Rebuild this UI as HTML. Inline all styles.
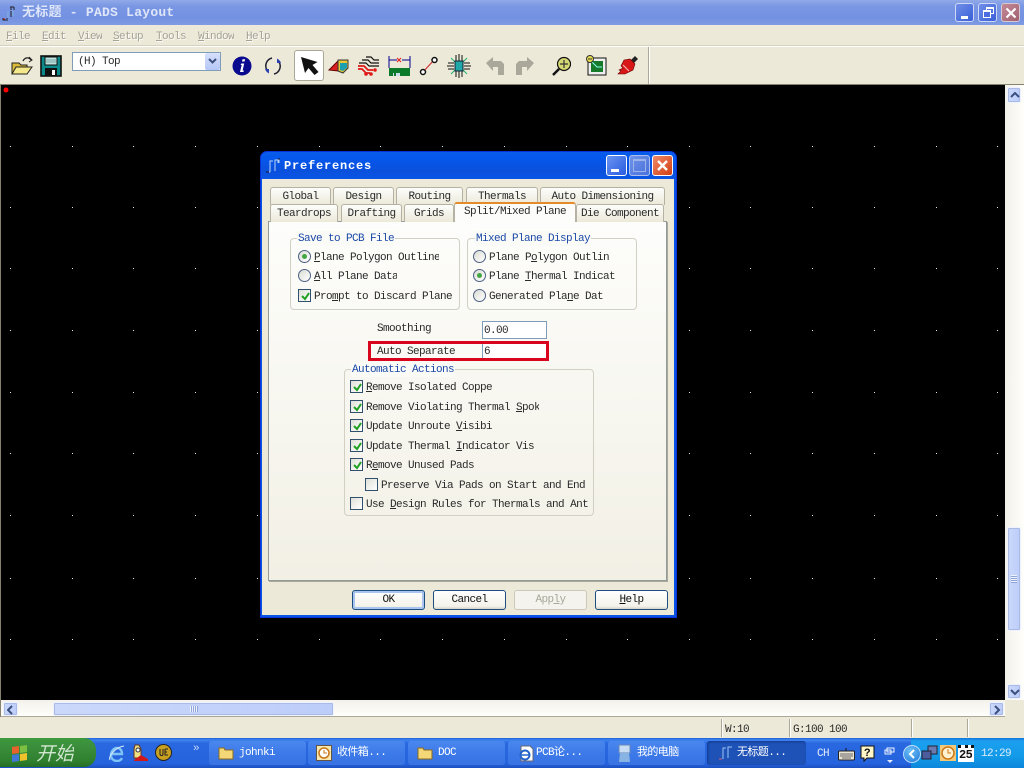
<!DOCTYPE html>
<html><head><meta charset="utf-8"><title>PADS Layout</title>
<style>
html,body{margin:0;padding:0;width:1024px;height:768px;overflow:hidden;background:#ece9d8}
div,span,svg{position:absolute;box-sizing:border-box}
u{text-decoration:underline}
.t{font:11px/14px "Liberation Mono","Noto Sans CJK SC",monospace;letter-spacing:-.6px;white-space:pre;color:#2a2a2a;overflow:hidden;padding-top:1px}
.m{color:#a5a396;text-shadow:1px 1px 0 #fbfaf5;font-size:11px;top:29px}
.tab{background:linear-gradient(#fdfdfb,#ece9d8);border:1px solid #b5b2a4;border-bottom:none;border-radius:3px 3px 0 0;text-align:center;font:11px/18px "Liberation Mono",monospace;letter-spacing:-.6px;color:#2a2a2a}
.grp{border:1px solid #d2d0c3;border-radius:4px}
.lbl{color:#1c4aa8;background:#fafaf6;padding:1px 1px 0}
.r{width:13px;height:13px;border:1px solid #4d6185;border-radius:50%;background:linear-gradient(135deg,#dcdcd5,#fff)}
.r.on:after{content:"";position:absolute;left:3px;top:3px;width:5px;height:5px;border-radius:50%;background:#43a644}
.c{width:13px;height:13px;border:1px solid #31506e;background:linear-gradient(135deg,#e0e0d9,#fff)}
.c svg{left:1px;top:1px}
.btn{top:590px;width:73px;height:20px;border:1px solid #1c4f80;border-radius:3px;background:linear-gradient(#fff,#f3f2ea 85%,#d6d0c5);text-align:center;font:11px/18px "Liberation Mono",monospace;letter-spacing:-.6px;color:#111}
.sb{background:linear-gradient(90deg,#cbd8fb,#bccdf9);border:1px solid #eef2fe;border-radius:2px;box-shadow:0 0 0 1px #a9bbe5 inset}
.tb{top:741px;height:24px;width:97px;background:linear-gradient(#4a87ee,#3b78e8 60%,#3a73e2);border-radius:3px;color:#fff;font:11px/23px "Liberation Mono","Noto Sans CJK SC",monospace;letter-spacing:-.6px;white-space:pre}
.tb span{left:30px;top:1px}
.sep{top:719px;height:18px;width:2px;border-left:1px solid #aca899;border-right:1px solid #fff}
</style></head><body>

<!-- title bar -->
<div style="left:0;top:0;width:1024px;height:25px;background:linear-gradient(#90a9e8,#7a97e4 25%,#7391e2 70%,#7e9be2)"></div>
<svg style="left:2px;top:5px" width="16" height="16" viewBox="0 0 16 16"><path d="M8 2h4M9 2v3M12 2v3M1 13v2h3M5 13v3M9 6v6" stroke="#222" fill="none"/><path d="M6 6v7M11 6v5" stroke="#7fb0e0" fill="none"/><path d="M1 14h2" stroke="#b22" fill="none"/></svg>
<div class="t" style="left:22px;top:4px;font-size:13px;line-height:16px;letter-spacing:.25px;color:#dfe6f8;font-weight:bold">无标题 - PADS Layout</div>
<div style="left:955px;top:3px;width:19px;height:19px;background:linear-gradient(135deg,#6f8fe8,#3a5fd8);border:1px solid #cfd8f5;border-radius:3px"><div style="left:5px;top:12px;width:7px;height:3px;background:#fff"></div></div>
<div style="left:978px;top:3px;width:19px;height:19px;background:linear-gradient(135deg,#6f8fe8,#3a5fd8);border:1px solid #cfd8f5;border-radius:3px"><div style="left:7px;top:3px;width:8px;height:7px;border:1px solid #fff;border-top-width:2px"></div><div style="left:4px;top:6px;width:8px;height:8px;border:1px solid #fff;border-top-width:2px;background:#4a6de0"></div></div>
<div style="left:1001px;top:3px;width:19px;height:19px;background:linear-gradient(135deg,#c48a98,#a06070);border:1px solid #d8c8d0;border-radius:3px"><svg style="left:3px;top:3px" width="12" height="12"><path d="M1.5 1.5l9 9M10.5 1.5l-9 9" stroke="#fff" stroke-width="2.2"/></svg></div>

<!-- menu -->
<div style="left:0;top:25px;width:1024px;height:21px;background:#ece9d8"></div>
<div style="left:0;top:46px;width:1024px;height:1px;background:#fff"></div>
<div style="left:0;top:45px;width:1024px;height:1px;background:#d5d2c2"></div>
<div class="t m" style="left:6px"><u>F</u>ile</div>
<div class="t m" style="left:42px"><u>E</u>dit</div>
<div class="t m" style="left:78px"><u>V</u>iew</div>
<div class="t m" style="left:113px"><u>S</u>etup</div>
<div class="t m" style="left:156px"><u>T</u>ools</div>
<div class="t m" style="left:198px"><u>W</u>indow</div>
<div class="t m" style="left:246px"><u>H</u>elp</div>

<!-- toolbar -->
<svg style="left:10px;top:55px" width="24" height="22" viewBox="0 0 24 22"><path d="M2 8h7l2 2h6v9H2z" fill="#d8b93a" stroke="#222"/><path d="M2 19l4-7h16l-5 7z" fill="#f5e88a" stroke="#222"/><path d="M13 6c2-4 6-4 8-1" stroke="#222" fill="none" stroke-width="1.3"/><path d="M19 2l3 3-3 2" stroke="#222" fill="none"/></svg>
<svg style="left:40px;top:55px" width="22" height="22" viewBox="0 0 22 22"><rect x="1" y="1" width="20" height="20" fill="#0a8a8a" stroke="#111" stroke-width="1.6"/><rect x="5" y="2" width="12" height="8" fill="#bfe0dc" stroke="#111"/><path d="M6 5h10M6 7h10" stroke="#7aa"/><rect x="5" y="13" width="12" height="8" fill="#111"/><rect x="12" y="15" width="3" height="5" fill="#fff"/></svg>
<div style="left:72px;top:52px;width:149px;height:19px;background:#fff;border:1px solid #7f9db9"></div>
<div class="t" style="left:78px;top:54px">(H) Top</div>
<div style="left:205px;top:53px;width:15px;height:17px;background:linear-gradient(#d6e0fb,#b5c7f7);border-radius:2px"><svg style="left:2px;top:5px" width="11" height="7"><path d="M2 1l3.500 3.500L9 1" stroke="#3a4f7e" stroke-width="2" fill="none"/></svg></div>
<svg style="left:232px;top:56px" width="20" height="20" viewBox="0 0 20 20"><circle cx="10" cy="10" r="9.500" fill="#0a0a8e"/><path d="M10.500 3.200h2.600l-.5 2.300H10zM9.200 7.500h3l-1.600 7h1.300l-.5 1.500H8l1.700-7H8.600z" fill="#fff"/></svg>
<svg style="left:262px;top:55px" width="22" height="22" viewBox="0 0 22 22"><path d="M5 15A8 8 0 0 1 10 3M17 7A8 8 0 0 1 12 19" fill="none" stroke="#223" stroke-width="1.500"/><path d="M15 3.500A8 8 0 0 1 19 8l-4 0zM7 18.500A8 8 0 0 1 3 14l4 0z" fill="#2a3fb0"/></svg>
<div style="left:294px;top:50px;width:30px;height:31px;background:#fff;border:1px solid #a9a797;border-radius:3px"><svg style="left:5px;top:5px" width="20" height="20" viewBox="0 0 20 20"><path d="M1 1l4 16 3.500-5 6 7 4-3-6-7 5-3z" fill="#111"/></svg></div>
<svg style="left:328px;top:56px" width="22" height="20" viewBox="0 0 22 20"><path d="M1 14l9-9v10z" fill="#d82020" stroke="#600"/><path d="M10 4h10v8l-5 5-5-2z" fill="#e6c632" stroke="#333"/><path d="M12 7h7v5l-4 3-3-1z" fill="#1ca0b0"/></svg>
<svg style="left:358px;top:56px" width="22" height="20" viewBox="0 0 22 20"><path d="M1 7h7l3 3h10M4 4h6l3 3h8M8 1h5l3 3h5" stroke="#111" stroke-width="1.200" fill="none"/><path d="M0 10h6l4 4h5M0 13h4l4 4h4" stroke="#e01818" stroke-width="1.800" fill="none"/><circle cx="8" cy="18" r="1.800" fill="#e01818"/><circle cx="13" cy="18" r="1.800" fill="#e01818"/><circle cx="17" cy="14" r="1.800" fill="#e01818"/></svg>
<svg style="left:388px;top:55px" width="23" height="22" viewBox="0 0 23 22"><path d="M1 1v12M22 1v12M1 5h8M14 5h8" stroke="#00008b" fill="none"/><path d="M9 3l4 4M13 3l-4 4" stroke="#e01818"/><rect x="1" y="13" width="21" height="8" fill="#0b7a2a"/><path d="M5 18h1v3H5zM8 18h4v3H8z" fill="#cde"/></svg>
<svg style="left:419px;top:56px" width="20" height="20" viewBox="0 0 20 20"><path d="M4 16L15 4" stroke="#d03030" stroke-width="1.200"/><circle cx="4" cy="16" r="2.500" fill="#fff" stroke="#111" stroke-width="1.500"/><circle cx="15.500" cy="4" r="2.500" fill="#fff" stroke="#111" stroke-width="1.500"/></svg>
<svg style="left:447px;top:54px" width="24" height="24" viewBox="0 0 24 24"><path d="M9 1v6M12 0v7M15 1v6M9 17v6M12 17v7M15 17v6M1 9h6M0 12h7M1 15h6M17 9h6M17 12h7M17 15h6" stroke="#111"/><path d="M4 4l5 5M20 4l-5 5M4 20l5-5M20 20l-5-5" stroke="#20b070"/><rect x="8" y="7" width="8" height="10" fill="#20a8a8" stroke="#123"/></svg>
<svg style="left:485px;top:56px" width="20" height="20" viewBox="0 0 20 20"><path d="M1 7l7-6v4h8l3 3v11h-6V11H8v4z" fill="#aaa89a"/></svg>
<svg style="left:515px;top:56px" width="20" height="20" viewBox="0 0 20 20"><path d="M19 7l-7-6v4H4L1 8v11h6V11h5v4z" fill="#aaa89a"/></svg>
<svg style="left:552px;top:56px" width="20" height="20" viewBox="0 0 20 20"><path d="M7 13l-6 6" stroke="#111" stroke-width="2.500"/><circle cx="12" cy="8" r="6.500" fill="#d6d873" stroke="#111" stroke-width="1.200"/><path d="M12 4v8M8 8h8" stroke="#333" stroke-width="1.200"/></svg>
<svg style="left:586px;top:55px" width="21" height="21" viewBox="0 0 21 21"><rect x="2" y="3" width="18" height="17" fill="#eee" stroke="#111"/><rect x="5" y="6" width="12" height="11" fill="#167a2a"/><path d="M6 7l5 5h5" stroke="#8fe" fill="none"/><circle cx="4" cy="4" r="3.500" fill="#e6dc50" stroke="#333"/><path d="M2 4h4" stroke="#333"/></svg>
<svg style="left:617px;top:55px" width="22" height="22" viewBox="0 0 22 22"><path d="M13 6l5-5 3 3-5 5z" fill="#222"/><path d="M7 5l6-1 5 5-2 6-8 4-7 0 3-3-2-1 4-2-2-2z" fill="#d81818" stroke="#600" stroke-width=".6"/><path d="M6 10l6 6" stroke="#f4c0c0"/></svg>
<div style="left:648px;top:47px;width:2px;height:37px;border-left:1px solid #aca899;border-right:1px solid #fff"></div>
<div style="left:0;top:84px;width:1024px;height:1px;background:#85836f"></div>

<!-- canvas -->
<div style="left:0;top:85px;width:1px;height:632px;background:#85836f"></div>
<div style="left:1px;top:85px;width:1005px;height:615px;background:#000"></div>
<svg style="left:0;top:0" width="1006" height="700" viewBox="0 0 1006 700">
<defs><path id="d" fill="#e8e8e8" d="M0 146h1v1H0zM0 207h1v1H0zM0 268h1v1H0zM0 330h1v1H0zM0 392h1v1H0zM0 453h1v1H0zM0 515h1v1H0zM0 578h1v1H0zM0 639h1v1H0z"/></defs>
<use href="#d" x="10"/><use href="#d" x="72"/><use href="#d" x="133"/><use href="#d" x="195"/><use href="#d" x="257"/><use href="#d" x="319"/><use href="#d" x="380"/><use href="#d" x="442"/><use href="#d" x="504"/><use href="#d" x="566"/><use href="#d" x="627"/><use href="#d" x="689"/><use href="#d" x="750"/><use href="#d" x="812"/><use href="#d" x="874"/><use href="#d" x="936"/><use href="#d" x="997"/>
<circle cx="6" cy="90" r="2.500" fill="#f00"/></svg>

<!-- v scrollbar -->
<div style="left:1005px;top:85px;width:19px;height:615px;background:linear-gradient(90deg,#f3f1ea,#fefefb)"></div>
<div style="left:1005px;top:700px;width:19px;height:17px;background:#ece9d8"></div>
<div class="sb" style="left:1007px;top:87px;width:14px;height:16px"><svg style="left:2px;top:4px" width="10" height="7"><path d="M1 5l4-4 4 4" stroke="#3a4f7e" stroke-width="2" fill="none"/></svg></div>
<div class="sb" style="left:1007px;top:527px;width:14px;height:104px"><div style="left:3px;top:47px;width:6px;height:8px;background:repeating-linear-gradient(#eef2fe 0 1px,#8fa5d8 1px 2px)"></div></div>
<div class="sb" style="left:1007px;top:684px;width:14px;height:15px"><svg style="left:2px;top:4px" width="10" height="7"><path d="M1 1l4 4 4-4" stroke="#3a4f7e" stroke-width="2" fill="none"/></svg></div>

<!-- h scrollbar -->
<div style="left:1px;top:700px;width:1004px;height:17px;background:linear-gradient(#f3f1ea,#fefefb);border-bottom:1px solid #aca899"></div>
<div class="sb" style="left:3px;top:702px;width:15px;height:14px"><svg style="left:3px;top:2px" width="7" height="10"><path d="M5 1L1 5l4 4" stroke="#3a4f7e" stroke-width="2" fill="none"/></svg></div>
<div class="sb" style="left:53px;top:702px;width:281px;height:14px"><div style="left:136px;top:3px;width:8px;height:6px;background:repeating-linear-gradient(90deg,#eef2fe 0 1px,#8fa5d8 1px 2px)"></div></div>
<div class="sb" style="left:989px;top:702px;width:15px;height:14px"><svg style="left:4px;top:2px" width="7" height="10"><path d="M1 1l4 4-4 4" stroke="#3a4f7e" stroke-width="2" fill="none"/></svg></div>

<!-- status bar -->
<div style="left:0;top:717px;width:1024px;height:21px;background:#ece9d8"></div>
<div class="sep" style="left:721px"></div><div class="sep" style="left:789px"></div><div class="sep" style="left:911px"></div><div class="sep" style="left:967px"></div>
<div class="t" style="left:725px;top:722px">W:10</div>
<div class="t" style="left:793px;top:722px">G:100 100</div>

<!-- dialog -->
<div style="left:260px;top:151px;width:417px;height:467px;background:#0a54e4;border-radius:7px 7px 0 0;border:1px solid #0831d9"></div>
<div style="left:261px;top:152px;width:415px;height:27px;background:linear-gradient(#0a5ce8,#0558ee 20%,#0a50dc 70%,#0a55e6);border-radius:6px 6px 0 0"></div>
<svg style="left:265px;top:158px" width="16" height="16" viewBox="0 0 16 16"><path d="M5 14V3h3M10 13V2h4v3M2 14h3M13 2v3" stroke="#bcd4f5" fill="none"/><path d="M1 14h3M13 1h2" stroke="#112" fill="none"/></svg>
<div class="t" style="left:284px;top:158px;color:#fff;font-weight:bold;font-size:12px;line-height:15px;letter-spacing:.8px">Preferences</div>
<div style="left:606px;top:155px;width:21px;height:21px;background:linear-gradient(135deg,#6a93f0,#2a5ce0);border:1px solid #fff;border-radius:3px"><div style="left:4px;top:13px;width:8px;height:3px;background:#fff"></div></div>
<div style="left:629px;top:155px;width:21px;height:21px;background:linear-gradient(135deg,#6f94e8,#4a70dc);border:1px solid #a9bff0;border-radius:3px"><div style="left:3px;top:3px;width:13px;height:13px;border:1px solid #9db4ea;border-top-width:2px"></div></div>
<div style="left:652px;top:155px;width:21px;height:21px;background:linear-gradient(135deg,#ef8b68,#d23e12);border:1px solid #fff;border-radius:3px"><svg style="left:3px;top:3px" width="13" height="13"><path d="M2 2l9 9M11 2l-9 9" stroke="#fff" stroke-width="2.400"/></svg></div>
<div style="left:262px;top:179px;width:412px;height:436px;background:#ece9d8"></div>

<!-- tabs -->
<div class="tab" style="left:270px;top:187px;width:61px;height:18px">Global</div>
<div class="tab" style="left:333px;top:187px;width:61px;height:18px">Design</div>
<div class="tab" style="left:396px;top:187px;width:67px;height:18px">Routing</div>
<div class="tab" style="left:466px;top:187px;width:72px;height:18px">Thermals</div>
<div class="tab" style="left:540px;top:187px;width:125px;height:18px">Auto Dimensioning</div>
<div style="left:268px;top:221px;width:399px;height:360px;background:linear-gradient(#fdfdfb,#f2f0e5);border:1px solid #919b9c;box-shadow:1px 1px 0 #aca899"></div>
<div class="tab" style="left:270px;top:204px;width:68px;height:18px">Teardrops</div>
<div class="tab" style="left:341px;top:204px;width:61px;height:18px">Drafting</div>
<div class="tab" style="left:404px;top:204px;width:50px;height:18px">Grids</div>
<div class="tab" style="left:576px;top:204px;width:88px;height:18px">Die Component</div>
<div class="tab" style="left:454px;top:202px;width:122px;height:20px;background:#fcfcfa;border-top:2px solid #e68b2c;line-height:17px;z-index:2">Split/Mixed Plane</div>

<!-- save group -->
<div class="grp" style="left:290px;top:238px;width:170px;height:72px"></div>
<div class="t lbl" style="left:297px;top:231px">Save to PCB File</div>
<div class="r on" style="left:298px;top:250px"></div>
<div class="t" style="left:314px;top:250px;width:125px"><u>P</u>lane Polygon Outline</div>
<div class="r" style="left:298px;top:269px"></div>
<div class="t" style="left:314px;top:269px;width:83px"><u>A</u>ll Plane Data</div>
<div class="c" style="left:298px;top:289px"><svg width="11" height="11"><path d="M2 5l3 3 4-6" stroke="#21a121" stroke-width="2" fill="none"/></svg></div>
<div class="t" style="left:314px;top:289px;width:140px">Pro<u>m</u>pt to Discard Plane</div>

<!-- mixed group -->
<div class="grp" style="left:467px;top:238px;width:170px;height:72px"></div>
<div class="t lbl" style="left:475px;top:231px">Mixed Plane Display</div>
<div class="r" style="left:473px;top:250px"></div>
<div class="t" style="left:489px;top:250px;width:120px">Plane P<u>o</u>lygon Outline</div>
<div class="r on" style="left:473px;top:269px"></div>
<div class="t" style="left:489px;top:269px;width:126px">Plane <u>T</u>hermal Indicator</div>
<div class="r" style="left:473px;top:289px"></div>
<div class="t" style="left:489px;top:289px;width:114px">Generated Pla<u>n</u>e Data</div>

<div class="t" style="left:377px;top:321px">Smoothing</div>
<div style="left:482px;top:321px;width:65px;height:18px;background:#fff;border:1px solid #7f9db9"></div>
<div class="t" style="left:484px;top:323px">0.00</div>
<div style="left:368px;top:341px;width:181px;height:20px;border:3px solid #d9041d;background:#fafaf6"></div>
<div style="left:482px;top:344px;width:64px;height:14px;background:#fff;border-left:1px solid #7f9db9"></div>
<div class="t" style="left:377px;top:344px">Auto Separate</div>
<div class="t" style="left:484px;top:344px">6</div>

<!-- auto group -->
<div class="grp" style="left:344px;top:369px;width:250px;height:147px"></div>
<div class="t lbl" style="left:351px;top:362px">Automatic Actions</div>
<div class="c" style="left:350px;top:380px"><svg width="11" height="11"><path d="M2 5l3 3 4-6" stroke="#21a121" stroke-width="2" fill="none"/></svg></div>
<div class="t" style="left:366px;top:380px;width:127px"><u>R</u>emove Isolated Copper</div>
<div class="c" style="left:350px;top:400px"><svg width="11" height="11"><path d="M2 5l3 3 4-6" stroke="#21a121" stroke-width="2" fill="none"/></svg></div>
<div class="t" style="left:366px;top:400px;width:173px">Remove Violating Thermal <u>S</u>poke</div>
<div class="c" style="left:350px;top:419px"><svg width="11" height="11"><path d="M2 5l3 3 4-6" stroke="#21a121" stroke-width="2" fill="none"/></svg></div>
<div class="t" style="left:366px;top:419px;width:126px">Update Unroute <u>V</u>isibility</div>
<div class="c" style="left:350px;top:439px"><svg width="11" height="11"><path d="M2 5l3 3 4-6" stroke="#21a121" stroke-width="2" fill="none"/></svg></div>
<div class="t" style="left:366px;top:439px;width:168px">Update Thermal <u>I</u>ndicator Visibility</div>
<div class="c" style="left:350px;top:458px"><svg width="11" height="11"><path d="M2 5l3 3 4-6" stroke="#21a121" stroke-width="2" fill="none"/></svg></div>
<div class="t" style="left:366px;top:458px">R<u>e</u>move Unused Pads</div>
<div class="c" style="left:365px;top:478px"></div>
<div class="t" style="left:381px;top:478px;width:205px">Preserve Via Pads on Start and End</div>
<div class="c" style="left:350px;top:497px"></div>
<div class="t" style="left:366px;top:497px;width:222px">Use <u>D</u>esign Rules for Thermals and Antipads</div>

<!-- buttons -->
<div class="btn" style="left:352px;box-shadow:inset 0 0 0 2px #a9c4ee">OK</div>
<div class="btn" style="left:433px">Cancel</div>
<div class="btn" style="left:514px;border-color:#c9c7ba;background:#f4f3ee;color:#a8a698">App<u>l</u>y</div>
<div class="btn" style="left:595px"><u>H</u>elp</div>

<!-- taskbar -->
<div style="left:0;top:738px;width:1024px;height:30px;background:linear-gradient(#1f5fd8 0,#3f85f0 2px,#2a68e0 5px,#2563de 85%,#1c50c0)"></div>
<div style="left:0;top:738px;width:96px;height:29px;background:linear-gradient(#3d9a3d,#3c8f3c 25%,#2f7f2f 80%,#256d25);border-radius:0 12px 12px 0"></div>
<svg style="left:10px;top:744px" width="20" height="19" viewBox="0 0 20 19"><path d="M2 3l7-1v7l-7 1z" fill="#e8622c"/><path d="M10 2l7-1v7l-7 1z" fill="#7bc043"/><path d="M2 11l7-1v7l-7 1z" fill="#3f78d8"/><path d="M10 10l7-1v7l-7 1z" fill="#f0c22c"/></svg>
<div class="t" style="left:36px;top:741px;color:#cfe6cf;font:italic 19px/22px 'Noto Sans CJK SC',sans-serif;letter-spacing:0">开始</div>
<svg style="left:108px;top:744px" width="18" height="18" viewBox="0 0 18 18"><path d="M3 10h11c0-4-2-6-5-6s-6 3-6 7 3 6 6 6c2 0 4-1 5-3" fill="none" stroke="#7fc4f5" stroke-width="2.400"/><path d="M2 16C0 12 8 3 16 2" stroke="#d8e8f8" fill="none"/></svg>
<svg style="left:131px;top:744px" width="18" height="18" viewBox="0 0 18 18"><path d="M4 1h4l2 4v9H3V5z" fill="#f0e080" stroke="#632"/><path d="M3 16l7-5 7 4v2H3z" fill="#d01818"/><circle cx="7" cy="6" r="2" fill="#fff" stroke="#333"/></svg>
<svg style="left:155px;top:744px" width="17" height="17" viewBox="0 0 17 17"><circle cx="8.500" cy="8.500" r="8" fill="#c8a020" stroke="#222"/><path d="M5 5v5c0 2 3 2 3 0V5M10 5h3M10 5v6h3M10 8h2" stroke="#222" fill="none"/></svg>
<div class="t" style="left:193px;top:741px;color:#c8daf8;font-size:11px">»</div>

<div class="tb" style="left:209px"><span>johnki</span><svg style="left:9px;top:5px" width="16" height="14" viewBox="0 0 16 14"><path d="M1 2h5l1 2h8v9H1z" fill="#f4d878" stroke="#8a6a20"/></svg></div>
<div class="tb" style="left:308px"><span style="left:29px">收件箱...</span><svg style="left:8px;top:4px" width="16" height="16" viewBox="0 0 16 16"><rect x=".5" y=".5" width="15" height="15" fill="#f8e8b0" stroke="#654"/><circle cx="8" cy="8" r="5" fill="#fff" stroke="#c87818" stroke-width="1.500"/><path d="M8 5v3h3" stroke="#c87818" fill="none"/></svg></div>
<div class="tb" style="left:408px"><span>DOC</span><svg style="left:9px;top:5px" width="16" height="14" viewBox="0 0 16 14"><path d="M1 2h5l1 2h8v9H1z" fill="#f4d878" stroke="#8a6a20"/></svg></div>
<div class="tb" style="left:508px"><span style="left:28px">PCB论...</span><svg style="left:10px;top:4px" width="16" height="17" viewBox="0 0 16 17"><path d="M3 1h9l3 3v12H3z" fill="#fff" stroke="#667"/><circle cx="7" cy="10" r="4.500" fill="none" stroke="#2464c8" stroke-width="2"/><path d="M3 10h8" stroke="#2464c8" stroke-width="1.500"/></svg></div>
<div class="tb" style="left:608px"><span style="left:29px">我的电脑</span><svg style="left:9px;top:3px" width="15" height="19" viewBox="0 0 15 19"><rect x="2" y="1" width="11" height="8" fill="#c8dcf4" stroke="#6688b8"/><path d="M3 9l-1 9h11l-1-9z" fill="#88b4e4"/></svg></div>
<div class="tb" style="left:707px;width:99px;background:#1e52b7;box-shadow:inset 1px 1px 2px #123a8c"><span>无标题...</span><svg style="left:11px;top:4px" width="16" height="16" viewBox="0 0 16 16"><path d="M5 14V3h3M10 13V2h4" stroke="#9cc4f5" fill="none"/><path d="M1 14h3" stroke="#d06080" fill="none"/></svg></div>

<div class="t" style="left:817px;top:746px;color:#e4ecfb">CH</div>
<svg style="left:838px;top:747px" width="17" height="14" viewBox="0 0 17 14"><path d="M8 4V1" stroke="#111"/><rect x=".5" y="4" width="16" height="9" rx="1" fill="#e8e4d4" stroke="#222"/><path d="M2 7h13M2 9h13M4 11h9" stroke="#666"/></svg>
<svg style="left:860px;top:745px" width="15" height="18" viewBox="0 0 15 18"><path d="M1 1h13v12H7l-3 3v-3H1z" fill="#fff7c8" stroke="#111"/></svg>
<div class="t" style="left:864px;top:746px;font-weight:bold;color:#111">?</div>
<svg style="left:883px;top:745px" width="14" height="20" viewBox="0 0 14 20"><path d="M4 3h7v4H4zM2 5h6v4H2z" fill="#2a68e0" stroke="#f0f4fc"/><path d="M4 15h6l-3 3z" fill="#e4ecfb"/></svg>

<div style="left:911px;top:738px;width:113px;height:30px;background:linear-gradient(#0f75d8 0,#1c9ff0 3px,#129be8 60%,#0c86dc)"></div>
<div style="left:903px;top:745px;width:18px;height:18px;border-radius:50%;background:radial-gradient(circle at 40% 30%,#6cc0f8,#1f76d8);border:1px solid #bcdcf8"><svg style="left:4px;top:3px" width="8" height="10"><path d="M6 1L2 5l4 4" stroke="#fff" stroke-width="2" fill="none"/></svg></div>
<svg style="left:921px;top:745px" width="17" height="17" viewBox="0 0 17 17"><rect x="7" y="1" width="9" height="8" fill="#6b7ab0" stroke="#223"/><rect x="1" y="6" width="9" height="8" fill="#4c5c9c" stroke="#223"/></svg>
<svg style="left:940px;top:745px" width="16" height="16" viewBox="0 0 16 16"><rect width="16" height="16" fill="#f4c878"/><circle cx="8" cy="8" r="6" fill="#fff2d0" stroke="#c87818" stroke-width="1.500"/><path d="M8 4v4h3" stroke="#c87818" fill="none"/></svg>
<div style="left:958px;top:745px;width:16px;height:17px;background:#fff;border-top:3px dotted #111"></div>
<div class="t" style="left:959px;top:747px;font-weight:bold;color:#111;font-size:12px">25</div>
<div class="t" style="left:981px;top:746px;color:#dcecfc;font-size:11px">12:29</div>
</body></html>
